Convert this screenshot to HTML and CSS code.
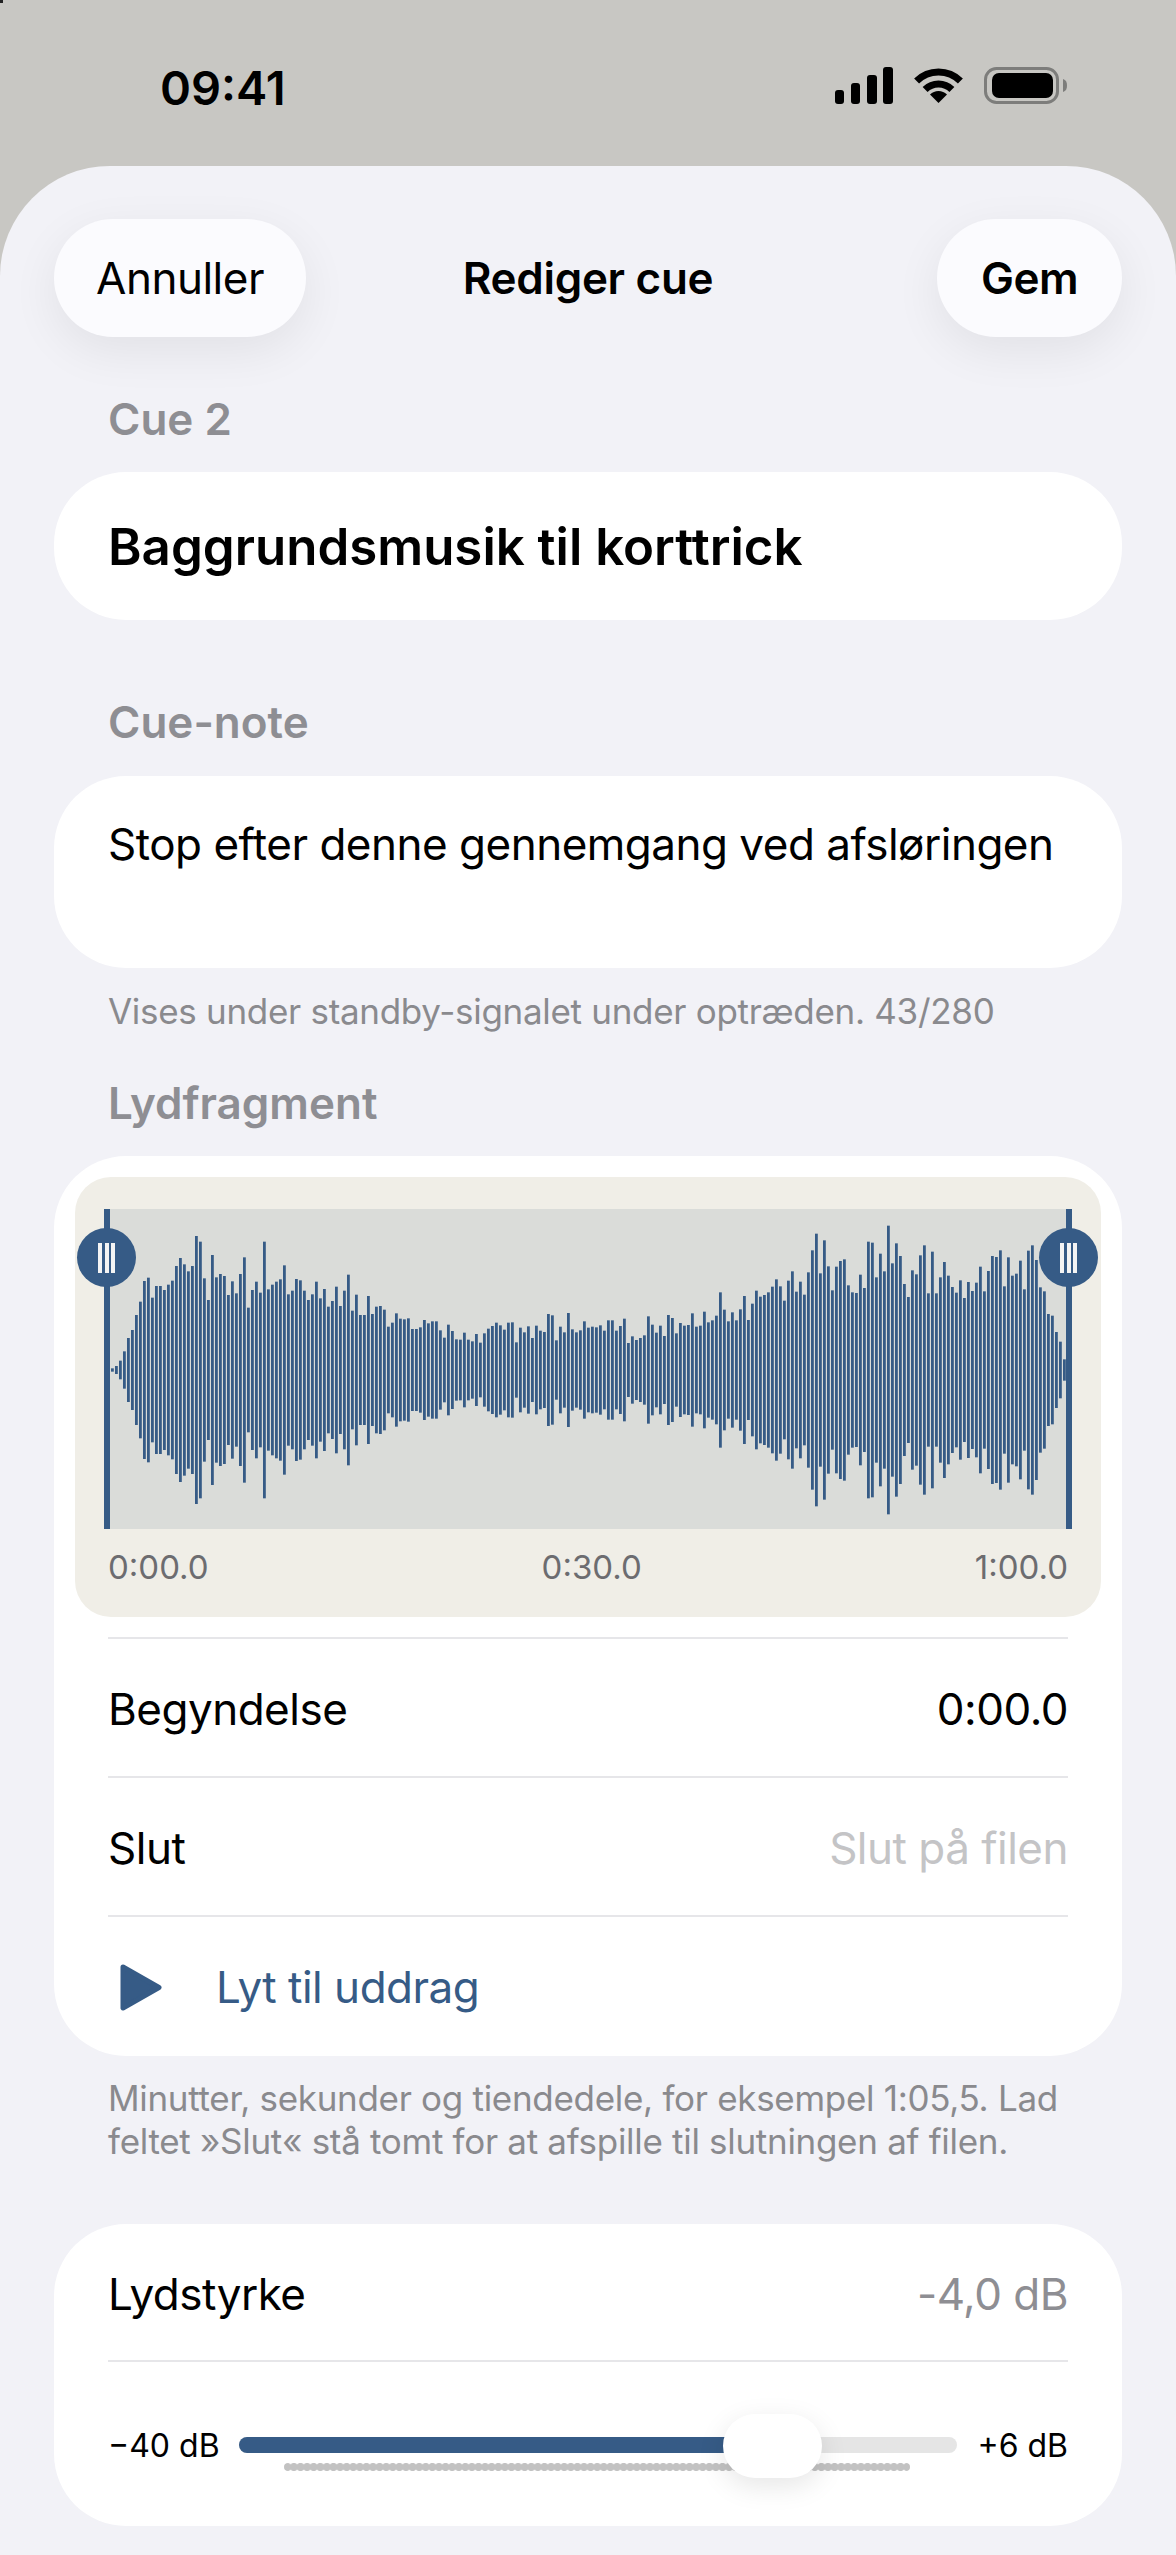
FILE: index.html
```html
<!DOCTYPE html>
<html lang="da">
<head>
    <meta charset="utf-8">
    <title>Rediger cue</title>
    <link rel="stylesheet" href="styles.css">
</head>
<body>
    <div class="corner-mark"></div>

    <div class="status-bar">
        <span class="status-time">09:41</span>
        <div class="status-icons">
            <svg width="58" height="37" viewBox="0 0 58 37">
                <rect x="0" y="23" width="9" height="14" rx="3"/>
                <rect x="16" y="16" width="9" height="21" rx="3"/>
                <rect x="32" y="8" width="10" height="29" rx="3"/>
                <rect x="48" y="0" width="10" height="37" rx="3"/>
            </svg>
            <svg width="51" height="37" viewBox="0 0 51 37">
                <path d="M3.6 14.1 A31 31 0 0 1 47.4 14.1" fill="none" stroke="#000" stroke-width="7"/>
                <path d="M12.1 22.6 A19 19 0 0 1 38.9 22.6" fill="none" stroke="#000" stroke-width="7"/>
                <path d="M25.5 36 L17 27.5 A12 12 0 0 1 34 27.5 Z"/>
            </svg>
            <svg width="83" height="37" viewBox="0 0 83 37">
                <rect x="1.5" y="1.5" width="72" height="34" rx="11" fill="none" stroke="#7d7d7b" stroke-width="3"/>
                <rect x="8" y="6" width="61" height="25" rx="7"/>
                <path d="M79 12 C82 13 83 15 83 18.500 C83 22 82 24 79 25 Z" fill="#7d7d7b"/>
            </svg>
        </div>
    </div>

    <div class="sheet">
        <div class="nav">
            <button class="nav-btn nav-cancel">Annuller</button>
            <span class="nav-title">Rediger cue</span>
            <button class="nav-btn nav-save">Gem</button>
        </div>

        <div class="section-label label-cue">Cue 2</div>
        <div class="card title-card">Baggrundsmusik til korttrick</div>

        <div class="section-label label-note">Cue-note</div>
        <div class="card note-card">Stop efter denne gennemgang ved afsløringen</div>
        <p class="hint hint-note">Vises under standby-signalet under optræden. 43/280</p>

        <div class="section-label label-clip">Lydfragment</div>
        <div class="card clip-card">
            <div class="wave-panel">
                <div class="wave-plot">
                    <svg id="waveform" class="wave-bars" width="956" height="320" viewBox="0 0 956 320"></svg>
                    <div class="knob knob-start"><i></i><i></i><i></i></div>
                    <div class="knob knob-end"><i></i><i></i><i></i></div>
                </div>
                <div class="wave-times">
                    <span>0:00.0</span>
                    <span>0:30.0</span>
                    <span>1:00.0</span>
                </div>
            </div>
            <div class="row row-first">
                <span>Begyndelse</span>
                <span>0:00.0</span>
            </div>
            <div class="row">
                <span>Slut</span>
                <span class="placeholder">Slut på filen</span>
            </div>
            <div class="row row-play">
                <svg class="play-icon" width="42" height="47" viewBox="0 0 42 47">
                    <path d="M3 3 L39 23.500 L3 44 Z" fill="#365b86" stroke="#365b86" stroke-width="5" stroke-linejoin="round"/>
                </svg>
                <span>Lyt til uddrag</span>
            </div>
        </div>
        <p class="hint hint-clip">Minutter, sekunder og tiendedele, for eksempel 1:05,5. Lad<br>feltet »Slut« stå tomt for at afspille til slutningen af filen.</p>

        <div class="card volume-card">
            <div class="row row-volume">
                <span>Lydstyrke</span>
                <span class="value-muted">-4,0 dB</span>
            </div>
            <div class="slider-row">
                <span class="slider-min">−40 dB</span>
                <div class="slider-track">
                    <div class="slider-fill"></div>
                    <div class="slider-ticks"></div>
                    <div class="slider-thumb"></div>
                </div>
                <span class="slider-max">+6 dB</span>
            </div>
        </div>
    </div>

    <script src="waveform.js"></script>
</body>
</html>
```

FILE: styles.css
```css
* {
  box-sizing: border-box;
}

html, body {
  margin: 0;
  padding: 0;
}

body {
  width: 1176px;
  height: 2555px;
  overflow: hidden;
  position: relative;
  background-color: #c8c7c3;
  font-family: Inter, "Liberation Sans", sans-serif;
  color: #000;
}

.corner-mark {
  position: absolute;
  left: 0;
  top: 0;
  width: 3px;
  height: 3px;
  background-color: #222;
}

.status-bar {
  height: 166px;
  display: flex;
  justify-content: space-between;
  padding: 60px 109px 0 160px;
}

.status-time {
  font-size: 47px;
  line-height: 56px;
  font-weight: 600;
}

.status-icons {
  display: flex;
  gap: 20px;
  height: 37px;
  margin-top: 7px;
}

.sheet {
  height: 2389px;
  background-color: #f2f2f7;
  border-radius: 110px 110px 0 0;
  padding: 53px 54px 0;
}

.nav {
  display: grid;
  grid-template-columns: 1fr auto 1fr;
  align-items: center;
  height: 118px;
}

.nav-btn {
  height: 118px;
  border: none;
  border-radius: 59px;
  background-color: #fbfbfe;
  box-shadow: 0 14px 48px rgba(0, 0, 0, 0.07);
  font-family: inherit;
  font-size: 44px;
  letter-spacing: -0.5px;
  color: #000;
  padding: 0;
}

.nav-cancel {
  width: 252px;
  justify-self: start;
}

.nav-save {
  width: 185px;
  justify-self: end;
  font-weight: 600;
}

.nav-title {
  font-size: 44px;
  letter-spacing: -0.3px;
  font-weight: 600;
}

.section-label {
  height: 50px;
  line-height: 50px;
  padding-left: 54px;
  margin-bottom: 28px;
  font-size: 44px;
  font-weight: 600;
  color: #8e8e93;
}

.label-cue {
  margin-top: 57px;
}

.label-note {
  margin-top: 77px;
  margin-bottom: 29px;
}

.label-clip {
  margin-top: 47px;
}

.card {
  background-color: #fff;
  border-radius: 72px;
}

.title-card {
  height: 148px;
  display: flex;
  align-items: center;
  padding: 0 54px;
  font-size: 51px;
  font-weight: 600;
}

.note-card {
  height: 192px;
  padding: 43px 54px 0;
  font-size: 44px;
  letter-spacing: -0.5px;
  line-height: 50px;
}

.hint {
  margin: 0;
  padding-left: 54px;
  font-size: 35px;
  letter-spacing: -0.3px;
  color: #8a8a8e;
}

.hint-note {
  margin-top: 23px;
  line-height: 40px;
}

.hint-clip {
  margin-top: 21px;
  line-height: 43px;
}

.clip-card {
  height: 900px;
  padding: 21px 21px 0;
}

.wave-panel {
  height: 440px;
  padding: 32px 29px 0;
  border-radius: 36px;
  background-color: #f0eee7;
}

.wave-plot {
  position: relative;
  height: 320px;
  background-color: #dadcd9;
  border-left: 6px solid #365b86;
  border-right: 6px solid #365b86;
}

.wave-bars {
  display: block;
}

.wave-bars rect {
  fill: #365b86;
}

.knob {
  position: absolute;
  top: 19px;
  width: 59px;
  height: 59px;
  border-radius: 50%;
  background-color: #365b86;
  display: flex;
  justify-content: center;
  align-items: center;
  gap: 2.500px;
}

.knob i {
  width: 4px;
  height: 30px;
  background-color: #f4f4f4;
}

.knob-start {
  left: -33px;
}

.knob-end {
  right: -32px;
}

.wave-times {
  display: flex;
  justify-content: space-between;
  padding: 0 4px;
  margin-top: 16px;
  font-size: 33px;
  line-height: 44px;
  color: #6c6c70;
}

.row {
  height: 139px;
  margin: 0 33px;
  padding-top: 3px;
  border-top: 2px solid #e6e6e9;
  display: flex;
  justify-content: space-between;
  align-items: center;
  font-size: 44px;
  letter-spacing: -0.5px;
}

.row-first {
  margin-top: 20px;
}

.row-play {
  justify-content: flex-start;
  color: #365b86;
}

.play-icon {
  margin-left: 12px;
  margin-right: 54px;
}

.placeholder {
  color: #c4c4c6;
}

.value-muted {
  color: #8e8e93;
}

.volume-card {
  height: 302px;
  margin-top: 61px;
  padding: 0 54px;
}

.row-volume {
  height: 138px;
  margin: 0;
  padding: 3px 0 0;
  border-top: none;
  border-bottom: 2px solid #e6e6e9;
}

.slider-row {
  display: flex;
  align-items: center;
  margin-top: 67px;
  height: 32px;
  font-size: 32px;
}

.slider-min {
  width: 131px;
}

.slider-max {
  width: 111px;
  text-align: right;
}

.slider-track {
  flex: 1;
  position: relative;
  height: 16px;
  border-radius: 8px;
  background-color: #e5e5e5;
}

.slider-fill {
  width: 70%;
  height: 16px;
  border-radius: 8px;
  background-color: #365b86;
}

.slider-ticks {
  position: absolute;
  left: 45px;
  right: 47px;
  top: 26px;
  height: 8px;
  border-radius: 4px;
  background-image: radial-gradient(circle at center, #c2c2c2 3.600px, transparent 4.600px);
  background-size: 6.600px 8px;
}

.slider-thumb {
  position: absolute;
  left: 484px;
  top: -23px;
  width: 99px;
  height: 64px;
  border-radius: 32px;
  background-color: #fff;
  box-shadow: 0 8px 28px rgba(0, 0, 0, 0.1);
}
```

FILE: waveform.js
```js
// top edge of each bar, measured in 1/3 px above the 630 centre line
const barTops = [
    625, 618, 602, 574, 534, 510, 465, 425, 363, 353, 413, 378, 378, 390, 374, 362, 318, 294, 313, 334,
    318, 228, 245, 355, 420, 285, 352, 342, 348, 405, 364, 400, 342, 292, 443, 390, 365, 398, 245, 388,
    374, 365, 358, 316, 403, 392, 357, 361, 392, 420, 403, 365, 415, 387, 440, 423, 380, 438, 392, 344,
    452, 404, 465, 465, 408, 462, 440, 438, 449, 500, 488, 460, 476, 478, 475, 507, 507, 502, 480, 490,
    484, 484,
    511, 533, 494, 513, 538, 539, 518, 539, 544, 522, 548, 520, 506, 498, 488, 496, 509, 488, 487, 547,
    503, 517, 499, 534, 497, 512, 516, 462, 466, 541, 500, 517, 459, 508, 517, 511, 484, 503, 500, 502,
    496, 512, 481, 481, 512, 498, 476, 549, 529, 540, 534, 526, 469, 494, 518, 497, 528, 465, 474, 520,
    489, 497, 495, 460, 500, 497, 455, 487, 481, 467, 397, 449, 484, 457, 481, 448, 408, 480, 431, 392,
    410, 405, 397, 380, 358, 379, 422, 362, 334, 395,
    365, 404, 337, 271, 221, 340, 241, 319, 391, 320, 303, 298, 376, 397, 399, 344, 384, 245, 248, 352,
    281, 334, 197, 310, 250, 288, 372, 411, 331, 343, 286, 256, 400, 275, 400, 352, 306, 347, 381, 398,
    361, 414, 366, 393, 368, 320, 394, 333, 288, 291, 271, 379, 292, 347, 341, 302, 388, 272, 256, 300,
    382, 394, 462, 467, 516, 545, 598
];

const waveform = document.getElementById('waveform');

barTops.forEach(function(top, i) {
    const half = (630 - top) / 3;
    const bar = document.createElementNS('http://www.w3.org/2000/svg', 'rect');
    bar.setAttribute('x', 1 + i * 4);
    bar.setAttribute('y', 161 - half);
    bar.setAttribute('width', 2.8);
    bar.setAttribute('height', half * 2);
    waveform.appendChild(bar);
});
```
